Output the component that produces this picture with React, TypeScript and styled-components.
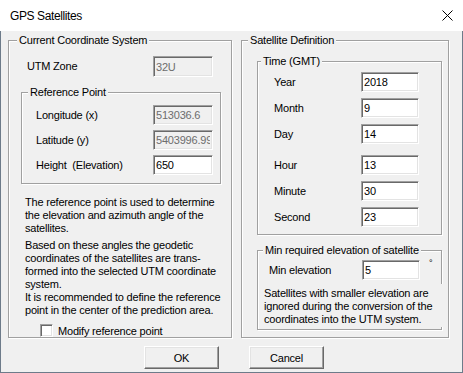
import React from "react";
import styled, { createGlobalStyle } from "styled-components";

const Global = createGlobalStyle`
  html, body { margin: 0; padding: 0; background: #ffffff; }
  body { font-family: "Liberation Sans", Arial, sans-serif; font-size: 11px; }
`;

const Window = styled.div`
  width: 463px;
  height: 373px;
  display: flex;
  flex-direction: column;
  box-sizing: border-box;
  font-family: "Liberation Sans", Arial, sans-serif;
  font-size: 11px;
  letter-spacing: -0.2px;
  color: #000;
`;

const TitleBar = styled.div`
  height: 31px;
  flex: none;
  background: #ffffff;
  display: flex;
  align-items: center;
  justify-content: space-between;
  padding: 0 10px;
`;

const Title = styled.span`
  font-size: 12px;
  letter-spacing: -0.4px;
  color: #000;
`;

const CloseIcon = styled.svg`
  width: 11px;
  height: 11px;
  display: block;
`;

const Body = styled.div`
  flex: 1;
  background: #f0f0f0;
  border: 1px solid #6d7b8a;
  border-top: none;
  padding: 9px 0 0 7px;
  display: flex;
  flex-direction: column;
`;

const GroupRow = styled.div`
  display: flex;
  gap: 9px;
  height: 298px;
`;

const GroupBox = styled.div<{ $w: number; $h: number; $pad: string; $m?: string }>`
  position: relative;
  box-sizing: border-box;
  width: ${(p) => p.$w}px;
  height: ${(p) => p.$h}px;
  padding: ${(p) => p.$pad};
  margin: ${(p) => p.$m ?? "0"};
  border: 1px solid #a0a0a0;
  box-shadow: inset 1px 1px 0 #ffffff, 1px 1px 0 #ffffff;
  display: flex;
  flex-direction: column;
  flex: none;
`;

const Legend = styled.span<{ $x: number }>`
  position: absolute;
  top: -7px;
  left: ${(p) => p.$x}px;
  padding: 0 2px;
  line-height: 13px;
  background: #f0f0f0;
  white-space: nowrap;
`;

const FieldRow = styled.div<{ $cols: string; $h: number; $top?: number; $indent?: number }>`
  display: grid;
  grid-template-columns: ${(p) => p.$cols};
  align-items: center;
  height: ${(p) => p.$h}px;
  margin-top: ${(p) => p.$top ?? 0}px;
  margin-left: ${(p) => p.$indent ?? 0}px;
`;

const Label = styled.span`
  white-space: pre;
  line-height: 13px;
`;

const Field = styled.input`
  box-sizing: border-box;
  width: 100%;
  height: 100%;
  margin: 0;
  padding: 0 2px;
  font: inherit;
  letter-spacing: inherit;
  color: #000;
  background: #ffffff;
  border: 1px solid;
  border-color: #a0a0a0 #ffffff #ffffff #a0a0a0;
  box-shadow: inset 1px 1px 0 #696969, inset -1px -1px 0 #e3e3e3;
  outline: none;
  border-radius: 0;
  &:disabled {
    background: #f0f0f0;
    color: #6d6d6d;
  }
`;

const Degree = styled.span`
  align-self: start;
  font-size: 9px;
  margin-left: 9px;
  margin-top: -1px;
  line-height: 9px;
`;

const Para = styled.div<{ $top: number; $indent: number }>`
  white-space: pre;
  line-height: 13px;
  margin-top: ${(p) => p.$top}px;
  margin-left: ${(p) => p.$indent}px;
`;

const CoverPara = styled(Para)`
  position: relative;
  width: 180px;
  padding: 3px 0 1px;
  background: #f0f0f0;
`;

const CheckRow = styled.label<{ $top: number; $indent: number }>`
  display: flex;
  align-items: center;
  gap: 5px;
  margin-top: ${(p) => p.$top}px;
  margin-left: ${(p) => p.$indent}px;
  height: 13px;
`;

const CheckBox = styled.span`
  box-sizing: border-box;
  width: 13px;
  height: 13px;
  background: #ffffff;
  border: 1px solid;
  border-color: #a0a0a0 #ffffff #ffffff #a0a0a0;
  box-shadow: inset 1px 1px 0 #696969, inset -1px -1px 0 #e3e3e3;
`;

const ButtonRow = styled.div`
  display: flex;
  gap: 30px;
  margin-top: 8px;
  padding-left: 136px;
`;

const Button = styled.button`
  box-sizing: border-box;
  width: 75px;
  height: 23px;
  margin: 0;
  padding: 0;
  font: inherit;
  letter-spacing: inherit;
  color: #000;
  background: #f0f0f0;
  border: 1px solid;
  border-color: #ffffff #696969 #696969 #ffffff;
  box-shadow: inset -1px -1px 0 #a0a0a0, inset 1px 1px 0 #e3e3e3;
  border-radius: 0;
`;

type Row = { label: string; value: string; top: number };

const timeRows: Row[] = [
  { label: "Year", value: "2018", top: 0 },
  { label: "Month", value: "9", top: 6 },
  { label: "Day", value: "14", top: 6 },
  { label: "Hour", value: "13", top: 11 },
  { label: "Minute", value: "30", top: 6 },
  { label: "Second", value: "23", top: 6 },
];

const refRows: Row[] = [
  { label: "Longitude (x)", value: "513036.6", top: 0 },
  { label: "Latitude (y)", value: "5403996.99", top: 5 },
];

export default function App() {
  return (
    <>
      <Global />
      <Window>
        <TitleBar>
          <Title>GPS Satellites</Title>
          <CloseIcon viewBox="0 0 11 11">
            <path d="M0.5 0.5 L10.5 10.5 M10.5 0.5 L0.5 10.5" stroke="#000" strokeWidth="1" fill="none" />
          </CloseIcon>
        </TitleBar>
        <Body>
          <GroupRow>
            <GroupBox $w={224} $h={298} $pad="0">
              <Legend $x={8}>Current Coordinate System</Legend>
              <FieldRow $cols="126px 60px" $h={21} $top={15} $indent={18}>
                <Label>UTM Zone</Label>
                <Field value="32U" disabled readOnly />
              </FieldRow>
              <GroupBox $w={200} $h={92} $pad="12px 0 0 14px" $m="15px 0 0 12px">
                <Legend $x={6}>Reference Point</Legend>
                {refRows.map((r) => (
                  <FieldRow key={r.label} $cols="117px 60px" $h={20} $top={r.top}>
                    <Label>{r.label}</Label>
                    <Field value={r.value} disabled readOnly />
                  </FieldRow>
                ))}
                <FieldRow $cols="117px 60px" $h={20} $top={5}>
                  <Label>{"Height  (Elevation)"}</Label>
                  <Field value="650" readOnly />
                </FieldRow>
              </GroupBox>
              <Para $top={12} $indent={16}>
                {"The reference point is used to determine\nthe elevation and azimuth angle of the\nsatellites."}
              </Para>
              <Para $top={4} $indent={16}>
                {"Based on these angles the geodetic\ncoordinates of the satellites are trans-\nformed into the selected UTM coordinate\nsystem.\nIt is recommended to define the reference\npoint in the center of the prediction area."}
              </Para>
              <CheckRow $top={7} $indent={31}>
                <CheckBox />
                <span>Modify reference point</span>
              </CheckRow>
            </GroupBox>
            <GroupBox $w={208} $h={298} $pad="0">
              <Legend $x={6}>Satellite Definition</Legend>
              <GroupBox $w={185} $h={174} $pad="10px 0 0 16px" $m="20px 0 0 15px">
                <Legend $x={3}>Time (GMT)</Legend>
                {timeRows.map((r) => (
                  <FieldRow key={r.label} $cols="87px 58px" $h={20} $top={r.top}>
                    <Label>{r.label}</Label>
                    <Field value={r.value} readOnly />
                  </FieldRow>
                ))}
              </GroupBox>
              <GroupBox $w={185} $h={80} $pad="9px 0 0 6px" $m="15px 0 0 15px">
                <Legend $x={5}>Min required elevation of satellite</Legend>
                <FieldRow $cols="93px 58px auto" $h={20} $indent={5}>
                  <Label>Min elevation</Label>
                  <Field value="5" readOnly />
                  <Degree>°</Degree>
                </FieldRow>
                <CoverPara $top={4} $indent={0}>
                  {"Satellites with smaller elevation are\nignored during the conversion of the\ncoordinates into the UTM system."}
                </CoverPara>
              </GroupBox>
            </GroupBox>
          </GroupRow>
          <ButtonRow>
            <Button>OK</Button>
            <Button>Cancel</Button>
          </ButtonRow>
        </Body>
      </Window>
    </>
  );
}
